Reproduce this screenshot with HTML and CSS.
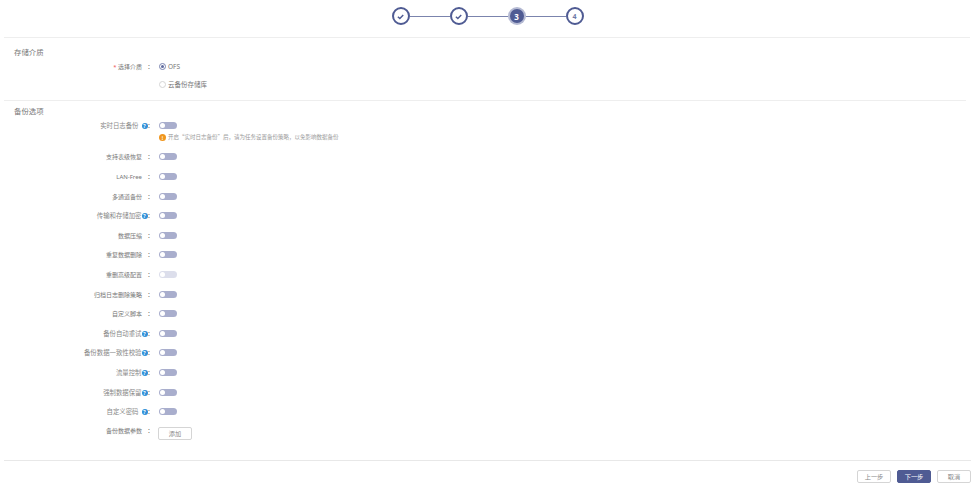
FILE: index.html
```html
<!DOCTYPE html>
<html lang="zh-CN">
<head>
<meta charset="UTF-8" />
<meta name="viewport" content="width=device-width, initial-scale=1.0" />
<title>备份选项</title>
<link rel="stylesheet" href="styles.css">
</head>
<body>

<div class="steps">
    <div class="step done"><svg viewBox="0 0 10 10"><path d="M2.6 5.2 4.4 6.8 7.5 3.6"/></svg></div>
    <div class="line"></div>
    <div class="step done"><svg viewBox="0 0 10 10"><path d="M2.6 5.2 4.4 6.8 7.5 3.6"/></svg></div>
    <div class="line"></div>
    <div class="step active">3</div>
    <div class="line"></div>
    <div class="step">4</div>
</div>

<div class="section media">
    <h2>存储介质</h2>
    <div class="row radio-row">
        <label><span class="req">*</span> 选择介质<span class="colon">:</span></label>
        <div class="radio on"></div><span class="val">OFS</span>
    </div>
    <div class="row radio-row">
        <label></label>
        <div class="radio"></div><span class="val">云备份存储库</span>
    </div>
</div>

<div class="section options">
    <h2>备份选项</h2>
    <div class="row first">
        <label class="tip">实时日志备份<i class="help gap">?</i><span class="colon">:</span></label>
        <div class="switch"></div>
    </div>
    <div class="hint"><i class="warn">!</i>开启“实时日志备份”后，请为任务设置备份策略，以免影响数据备份</div>
    <div class="row"><label>支持表级恢复<span class="colon">:</span></label><div class="switch"></div></div>
    <div class="row"><label>LAN-Free<span class="colon">:</span></label><div class="switch"></div></div>
    <div class="row"><label>多通道备份<span class="colon">:</span></label><div class="switch"></div></div>
    <div class="row"><label class="tip">传输和存储加密<i class="help">?</i><span class="colon">:</span></label><div class="switch"></div></div>
    <div class="row"><label>数据压缩<span class="colon">:</span></label><div class="switch"></div></div>
    <div class="row"><label>重复数据删除<span class="colon">:</span></label><div class="switch"></div></div>
    <div class="row"><label>重删高级配置<span class="colon">:</span></label><div class="switch off"></div></div>
    <div class="row"><label>归档日志删除策略<span class="colon">:</span></label><div class="switch"></div></div>
    <div class="row"><label>自定义脚本<span class="colon">:</span></label><div class="switch"></div></div>
    <div class="row"><label class="tip">备份自动重试<i class="help">?</i><span class="colon">:</span></label><div class="switch"></div></div>
    <div class="row"><label class="tip">备份数据一致性校验<i class="help">?</i><span class="colon">:</span></label><div class="switch"></div></div>
    <div class="row"><label class="tip">流量控制<i class="help">?</i><span class="colon">:</span></label><div class="switch"></div></div>
    <div class="row"><label class="tip">强制数据保留<i class="help">?</i><span class="colon">:</span></label><div class="switch"></div></div>
    <div class="row"><label class="tip">自定义密码<i class="help gap">?</i><span class="colon">:</span></label><div class="switch"></div></div>
    <div class="row add-row"><label>备份数据参数<span class="colon">:</span></label><button class="btn add">添加</button></div>
</div>

<div class="footer">
    <button class="btn">上一步</button>
    <button class="btn primary">下一步</button>
    <button class="btn">取消</button>
</div>

</body>
</html>
```

FILE: styles.css
```css
body {
    font-family: "Noto Sans", "Noto Sans CJK SC", sans-serif;
    background: #fff;
    color: #777;
    margin: 0;
    font-size: 6px;
}

.steps {
    display: flex;
    align-items: center;
    justify-content: center;
    height: 32px;
    border-bottom: 1px solid #eee;
    margin: 0 4px;
    padding: 0 0 5px 1px;
}

.step {
    width: 14px;
    height: 14px;
    border: 2px solid #4f5b93;
    border-radius: 50%;
    display: flex;
    align-items: center;
    justify-content: center;
    color: #6f79a8;
    font-size: 7px;
    font-weight: bold;
    background: #fff;
    flex: none;
}

.step svg {
    width: 11px;
    height: 11px;
    fill: none;
    stroke: #4f5b93;
    stroke-width: 1.3;
}

.step.active {
    background: #4f5b93;
    color: #fff;
    border: 0;
    box-shadow: 0 0 0 2px #b5bad3;
    margin: 0 2px;
    font-size: 8px;
}

.line {
    width: 40px;
    height: 1px;
    background: #7b84ad;
}

h2 {
    font-size: 7.4px;
    font-weight: normal;
    color: #777;
    margin: 0;
    height: 12px;
    line-height: 12px;
}

.section {
    margin: 0 8px 0 14px;
}

.media {
    padding-top: 8px;
    height: 54px;
    border-bottom: 1px solid #eee;
    margin-left: 4px;
    padding-left: 10px;
}

.media .row {
    height: 17.5px;
}

.options {
    padding-top: 4px;
}

.row {
    display: flex;
    align-items: center;
    height: 19.6px;
}

.row.first {
    margin-top: 1px;
    height: 15px;
}

.row label {
    width: 136px;
    margin-right: 8px;
    text-align: right;
    white-space: nowrap;
    flex: none;
}

.row label.tip {
    font-size: 6.4px;
    color: #888;
}

.colon {
    display: inline-block;
    width: 8px;
    text-align: right;
    font-size: 7px;
    line-height: 1;
    color: #666;
}

.tip .colon {
    width: 2.5px;
}

.req {
    color: #e55;
}

.help {
    display: inline-block;
    width: 6px;
    height: 6px;
    border-radius: 50%;
    background: #2f8fd8;
    color: #fff;
    font-size: 5px;
    line-height: 6px;
    text-align: center;
    font-style: normal;
    font-weight: bold;
}

.help.gap {
    margin-left: 3px;
}

.switch {
    width: 18px;
    height: 7px;
    margin-left: 1px;
    border-radius: 4px;
    background: #a9aecd;
    position: relative;
}

.switch::before {
    content: "";
    position: absolute;
    left: 1px;
    top: 1px;
    width: 5px;
    height: 5px;
    border-radius: 50%;
    background: #fff;
}

.switch.off {
    background: #dcdeeb;
}

.radio {
    width: 5px;
    height: 5px;
    border: 1px solid #d5d5d5;
    border-radius: 50%;
    margin: 0 2px 0 1px;
    position: relative;
}

.radio.on {
    border-color: #7a84b0;
}

.radio.on::before {
    content: "";
    position: absolute;
    left: 1px;
    top: 1px;
    width: 3px;
    height: 3px;
    border-radius: 50%;
    background: #5f6a9e;
}

.val {
    font-size: 6.5px;
}

.hint {
    margin-left: 145px;
    height: 9px;
    line-height: 9px;
    font-family: "Noto Sans CJK SC", sans-serif;
    font-size: 5.5px;
    color: #999;
    display: flex;
    align-items: center;
    margin-bottom: 5.2px;
}

.warn {
    width: 7px;
    height: 7px;
    border-radius: 50%;
    background: #f0961e;
    color: #fff;
    font-style: normal;
    font-weight: bold;
    font-size: 5px;
    line-height: 7px;
    text-align: center;
    margin-right: 2px;
}

.btn {
    font-family: inherit;
    font-size: 6.2px;
    color: #888;
    background: #fff;
    border: 1px solid #d5d5d5;
    border-radius: 2px;
    height: 13px;
    width: 34px;
    padding: 0;
}

.btn.primary {
    background: #4f5b93;
    border-color: #4f5b93;
    color: #fff;
}

.add-row {
    height: 23px;
}

.add-row label {
    align-self: flex-start;
    line-height: 19px;
}

.footer {
    display: flex;
    justify-content: flex-end;
    gap: 6px;
    margin: 15.8px 3px 0 4px;
    padding-top: 9px;
    border-top: 1px solid #e8e8e8;
}
```
